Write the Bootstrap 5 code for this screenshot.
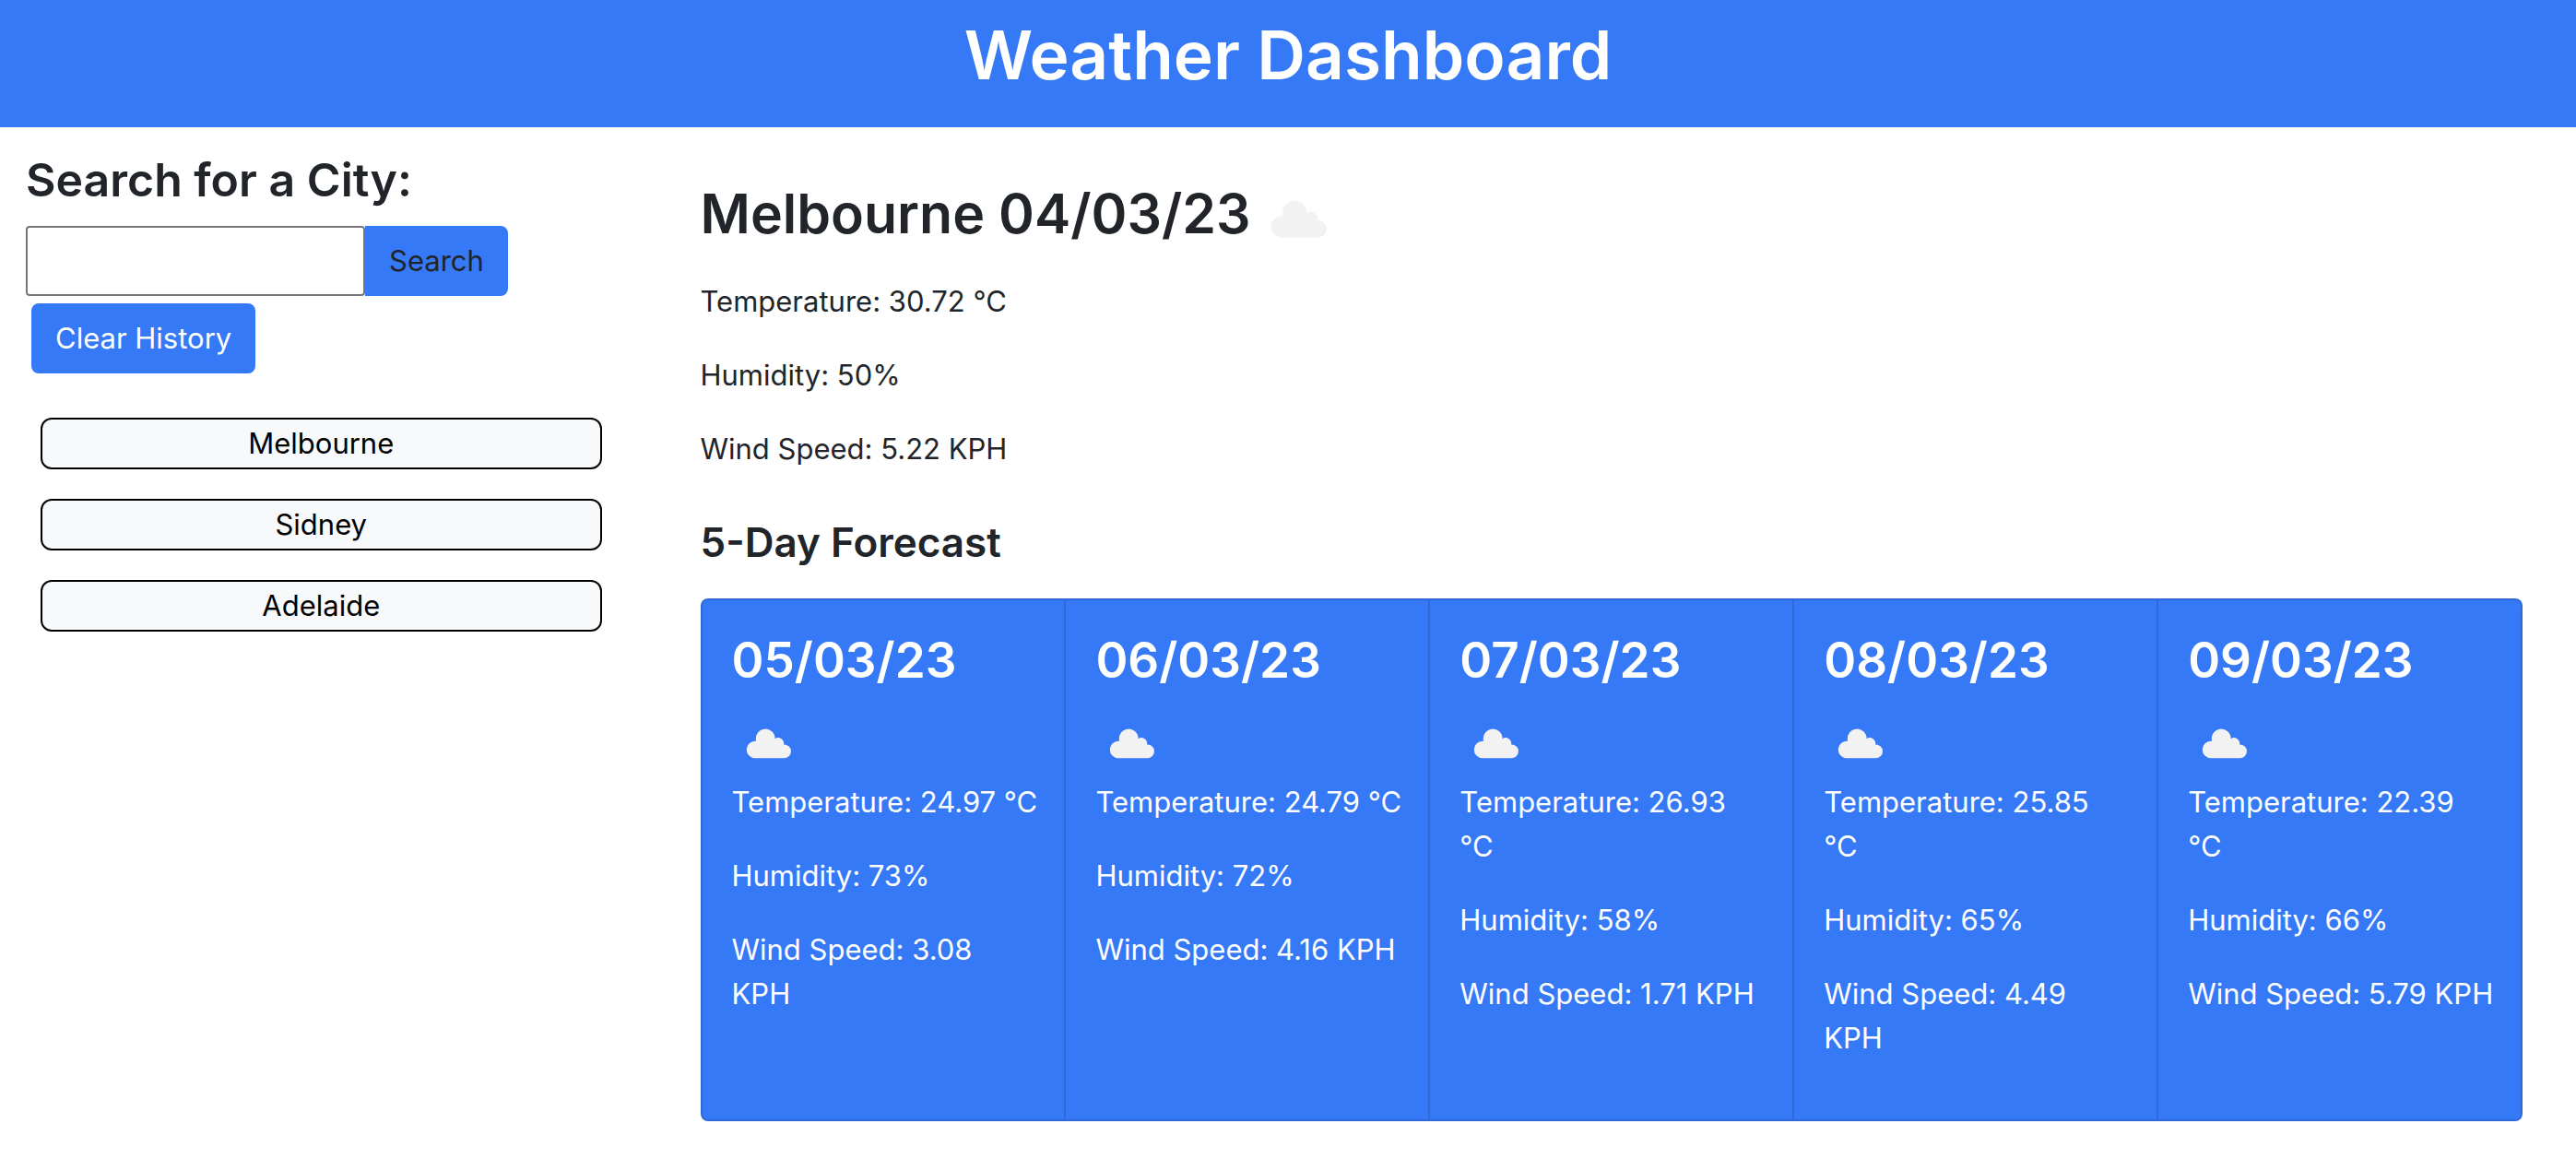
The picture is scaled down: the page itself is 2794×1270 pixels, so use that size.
<!DOCTYPE html>
<html lang="en">
<head>
<meta charset="utf-8">
<meta name="viewport" content="width=device-width, initial-scale=1">
<title>Weather Dashboard</title>
<link href="https://cdn.jsdelivr.net/npm/bootstrap@5.3.0/dist/css/bootstrap.min.css" rel="stylesheet">
<style>
  :root { font-size: 32px; --brand: #3579f6; }
  body { font-family: Inter, "Liberation Sans", sans-serif; font-size: 31px; line-height: 48px; color: #212529; }
  h1, h2, h3, h4 { font-weight: 600; }
  h1 { font-size: 73px; line-height: 96px; }
  h2 { font-size: 59px; line-height: 77px; }
  h3 { font-size: 53px; line-height: 67px; }
  h4 { font-size: 44px; line-height: 58px; }
  p { margin-bottom: 32px; }
  .brand-bg { background: var(--brand); }
  .page-head { padding: 12px 0 14px; }
  .side-pane { padding: 24px 30px 24px 28px; }
  .side-pane h3 { font-size: 50px; }
  .main-pane { padding: 49px 58px 49px 61px; }
  .btn { --bs-btn-font-size: 31px; --bs-btn-line-height: 48px; --bs-btn-padding-x: 24px; --bs-btn-padding-y: 12px; --bs-btn-border-width: 2px; --bs-btn-border-radius: 8px; }
  .btn-brand { --bs-btn-bg: var(--brand); --bs-btn-border-color: var(--brand); --bs-btn-hover-bg: #2e6ad8; --bs-btn-hover-border-color: #2e6ad8; }
  .search-btn { border-radius: 0 8px 8px 0; }
  .city-input { width: 368px; border: 2px solid #767676; border-radius: 4px; padding: 2px 8px; background: #fff; }
  .clear-btn { margin: 8px 6px 48px; }
  .city-btn { border: 2px solid #000; border-radius: 12px; background: #f8f9fb; color: #000; height: 56px; line-height: 48px; padding: 0 12px; }
  .history-list { gap: 32px; padding: 0 16px; }
  .cloud-lg { width: 100px; height: 100px; margin-left: 2px; }
  .cloud-sm { width: 80px; height: 80px; }
  .forecast-title { margin: 48px 0 32px; }
  .card { --bs-card-bg: var(--brand); --bs-card-color: #fff; --bs-card-border-width: 2px; --bs-card-border-color: rgba(0,0,0,.125); --bs-card-border-radius: 8px; --bs-card-inner-border-radius: 6px; --bs-card-spacer-x: 32px; --bs-card-spacer-y: 32px; }
  .card p:last-child { margin-bottom: 32px; }
  .card-body { white-space: nowrap; }
</style>
<script src="https://cdn.jsdelivr.net/npm/bootstrap@5.3.0/dist/js/bootstrap.bundle.min.js"></script>
</head>
<body>
<svg class="d-none" aria-hidden="true">
  <symbol id="cloud" viewBox="0 0 80 80">
    <path fill="#f2f2f2" d="M25 56.3A9.2 9.2 0 0 1 25 37.8H26.2A10.4 10.4 0 1 1 46.6 35.2A6.2 6.2 0 0 1 56.1 41.5A7.4 7.4 0 0 1 57 56.3Z"/>
  </symbol>
</svg>
<header class="brand-bg text-white text-center page-head">
  <h1>Weather Dashboard</h1>
</header>
<div class="row g-0">
  <aside class="col-3 side-pane">
    <form onsubmit="return false">
      <h3><label for="city">Search for a City:</label></h3>
      <div class="d-flex">
        <input class="city-input" type="text" id="city">
        <button class="btn btn-brand search-btn" type="submit">Search</button>
      </div>
    </form>
    <button class="btn btn-brand text-white clear-btn" type="button">Clear History</button>
    <div class="d-flex flex-column history-list">
      <button class="city-btn" type="button">Melbourne</button>
      <button class="city-btn" type="button">Sidney</button>
      <button class="city-btn" type="button">Adelaide</button>
    </div>
  </aside>
  <main class="col-9 main-pane">
    <section>
      <h2>Melbourne 04/03/23<svg class="cloud-lg align-middle" role="img" aria-label="Cloudy"><use href="#cloud"/></svg></h2>
      <p>Temperature: 30.72 °C</p>
      <p>Humidity: 50%</p>
      <p>Wind Speed: 5.22 KPH</p>
    </section>
    <section>
      <h4 class="forecast-title">5-Day Forecast</h4>
      <div class="card-group">
        <div class="card"><div class="card-body">
          <h3>05/03/23</h3>
          <svg class="cloud-sm d-block" role="img" aria-label="Cloudy"><use href="#cloud"/></svg>
          <p>Temperature: 24.97 °C</p>
          <p>Humidity: 73%</p>
          <p>Wind Speed: 3.08<br>KPH</p>
        </div></div>
        <div class="card"><div class="card-body">
          <h3>06/03/23</h3>
          <svg class="cloud-sm d-block" role="img" aria-label="Cloudy"><use href="#cloud"/></svg>
          <p>Temperature: 24.79 °C</p>
          <p>Humidity: 72%</p>
          <p>Wind Speed: 4.16 KPH</p>
        </div></div>
        <div class="card"><div class="card-body">
          <h3>07/03/23</h3>
          <svg class="cloud-sm d-block" role="img" aria-label="Cloudy"><use href="#cloud"/></svg>
          <p>Temperature: 26.93<br>°C</p>
          <p>Humidity: 58%</p>
          <p>Wind Speed: 1.71 KPH</p>
        </div></div>
        <div class="card"><div class="card-body">
          <h3>08/03/23</h3>
          <svg class="cloud-sm d-block" role="img" aria-label="Cloudy"><use href="#cloud"/></svg>
          <p>Temperature: 25.85<br>°C</p>
          <p>Humidity: 65%</p>
          <p>Wind Speed: 4.49<br>KPH</p>
        </div></div>
        <div class="card"><div class="card-body">
          <h3>09/03/23</h3>
          <svg class="cloud-sm d-block" role="img" aria-label="Cloudy"><use href="#cloud"/></svg>
          <p>Temperature: 22.39<br>°C</p>
          <p>Humidity: 66%</p>
          <p>Wind Speed: 5.79 KPH</p>
        </div></div>
      </div>
    </section>
  </main>
</div>
</body>
</html>
